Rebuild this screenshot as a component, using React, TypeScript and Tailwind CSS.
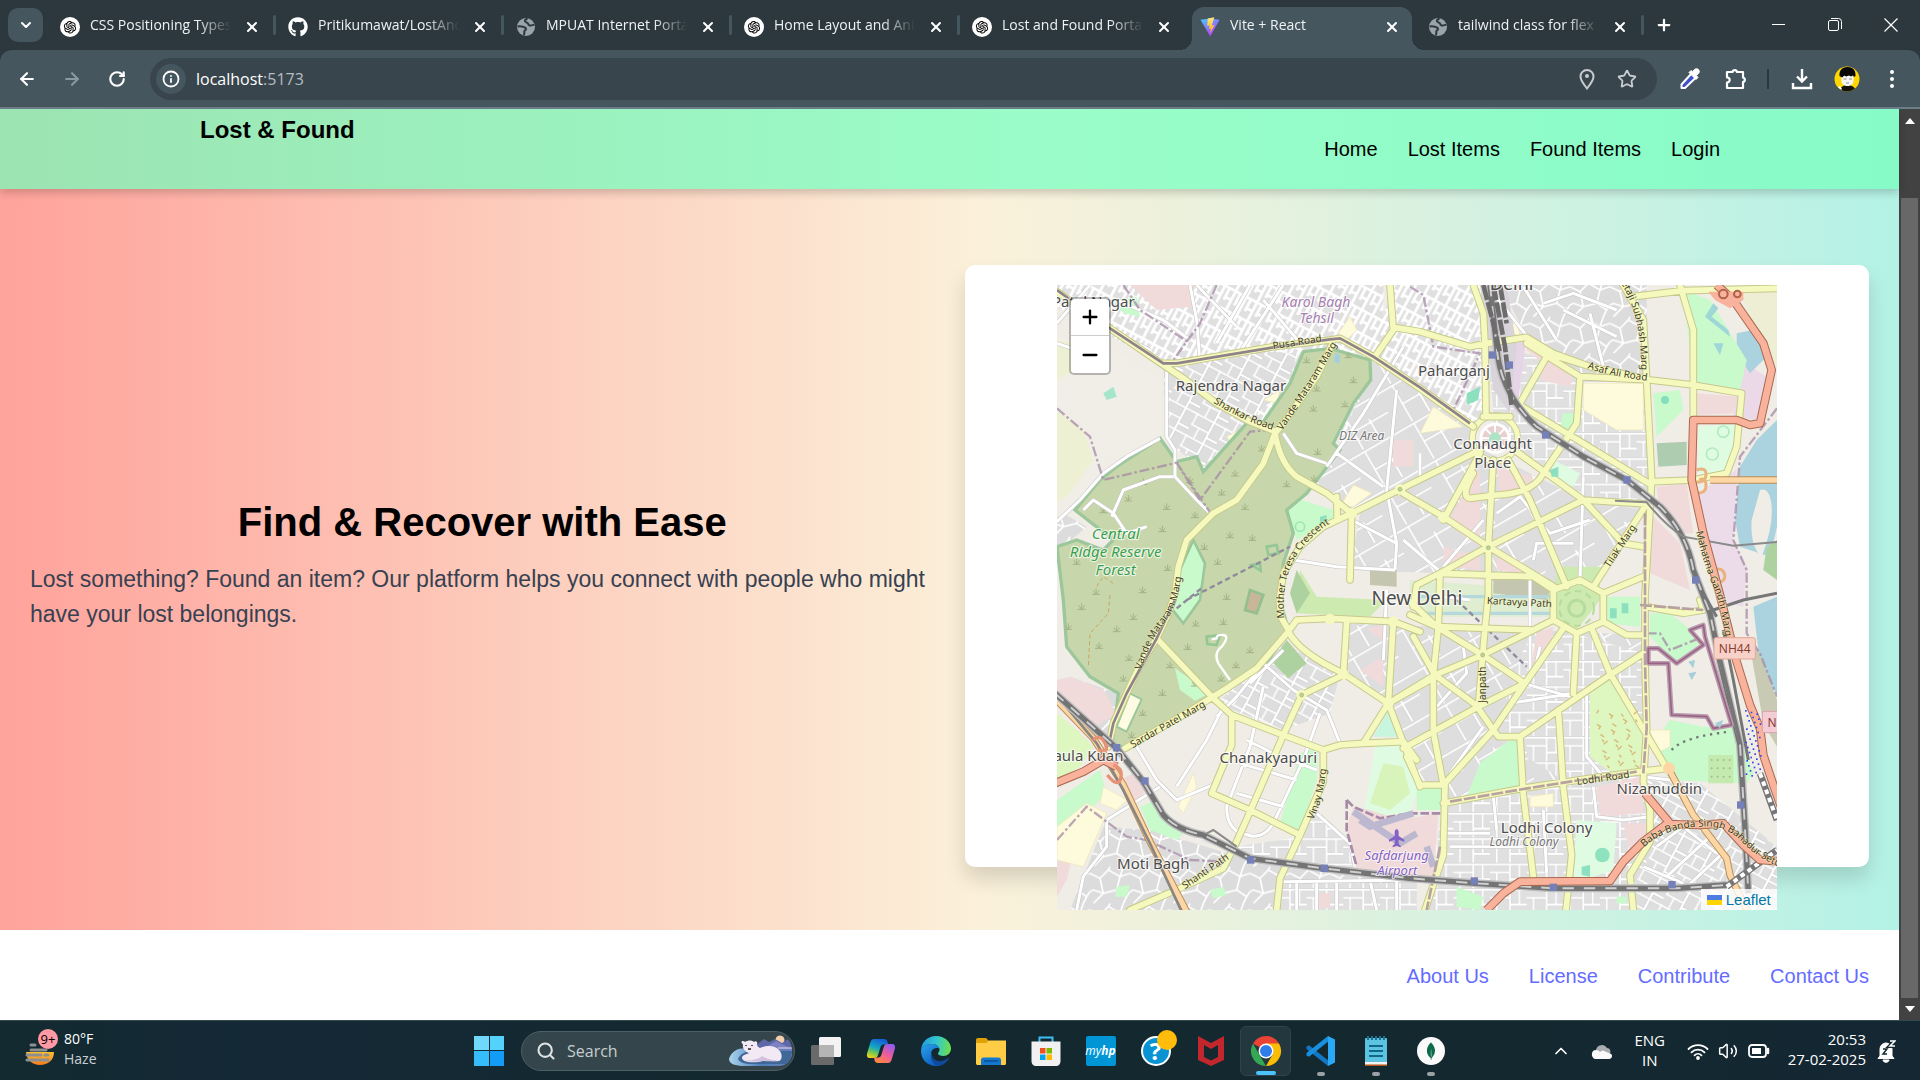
import React from "react";
import { AiOutlineOpenAI } from "react-icons/ai";
import { FaGithub } from "react-icons/fa";
import { SiMongodb } from "react-icons/si";
import {
  ArrowLeft,
  ArrowRight,
  ChevronDown,
  ChevronUp,
  Info,
  Minus,
  Plus,
  RotateCw,
  Search,
  Star,
  Volume2,
  X,
} from "lucide-react";

/* ---------- Browser tab strip ---------- */

function ChatIcon() {
  return (
    <span className="flex size-5 items-center justify-center rounded-full bg-white text-black">
      <AiOutlineOpenAI className="size-4" />
    </span>
  );
}

function GlobeIcon() {
  return (
    <svg viewBox="0 0 20 20" className="size-5" aria-hidden="true">
      <circle cx="10" cy="10" r="9" fill="#9aa3ab" />
      <path
        d="M1.500 9.500c3-.6 4.500 0 6 .4 1.800.4 2.700 1 2.500 2.300-.2 1-1.700 1-1.700 2.300 0 1.200.4 2.200-.6 3.800"
        fill="none"
        stroke="#2d383e"
        strokeWidth="2"
      />
      <path d="M11.500 1.500c-2.300 1-3.300 2-2.300 3.200.8 1 2.800.6 3 2.200.2 1.500 1.600 1.900 3.300 1.500l3-.8" fill="none" stroke="#2d383e" strokeWidth="2" />
    </svg>
  );
}

function ViteIcon() {
  return (
    <svg viewBox="0 0 20 20" className="size-5" aria-hidden="true">
      <defs>
        <linearGradient id="viteA" x1="0" y1="0" x2="0.6" y2="1">
          <stop offset="0" stopColor="#41d1ff" />
          <stop offset="1" stopColor="#bd34fe" />
        </linearGradient>
        <linearGradient id="viteB" x1="0" y1="0" x2="0" y2="1">
          <stop offset="0" stopColor="#ffea83" />
          <stop offset="1" stopColor="#ffa800" />
        </linearGradient>
      </defs>
      <path d="M0.500 2.800 10 1.500 19.600 2.800 10.300 19.600z" fill="url(#viteA)" />
      <path d="M14.300.2 7.700 1.500 7.200 8.900l2.500-.5-.8 3.500 2-.5-.9 5.300 4.500-8.800-2.700.6z" fill="url(#viteB)" />
    </svg>
  );
}

type Tab = { title: string; icon: React.ReactNode; active?: boolean; sep?: boolean };

const tabs: Tab[] = [
  { title: "CSS Positioning Types", icon: <ChatIcon />, sep: true },
  { title: "Pritikumawat/LostAnd", icon: <FaGithub className="size-5 text-white" />, sep: true },
  { title: "MPUAT Internet Portal", icon: <GlobeIcon />, sep: true },
  { title: "Home Layout and Ani", icon: <ChatIcon />, sep: true },
  { title: "Lost and Found Portal", icon: <ChatIcon /> },
  { title: "Vite + React", icon: <ViteIcon />, active: true },
  { title: "tailwind class for flex", icon: <GlobeIcon />, sep: true },
];

function TabItem({ tab }: { tab: Tab }) {
  return (
    <div className="relative flex h-full min-w-0 max-w-[228px] flex-1 items-end">
      <div
        className={
          tab.active
            ? "relative mx-1 flex h-[43px] min-w-0 flex-1 items-center rounded-t-xl bg-[#45565f] pl-2 pr-[10px] pb-2"
            : "relative mx-1 flex h-[43px] min-w-0 flex-1 items-center pl-2 pr-[10px] pb-2"
        }
      >
        {tab.active && (
          <>
            <span className="absolute bottom-0 -left-3 size-3 bg-[radial-gradient(circle_at_0_0,transparent_12px,#45565f_12px)]" />
            <span className="absolute bottom-0 -right-3 size-3 bg-[radial-gradient(circle_at_100%_0,transparent_12px,#45565f_12px)]" />
          </>
        )}
        <span className="mt-1 shrink-0">{tab.icon}</span>
        <span className="ml-[10px] mr-2 flex-1 overflow-hidden whitespace-nowrap text-sm leading-5 text-[#eef2f4] [mask-image:linear-gradient(to_right,#000_75%,transparent_98%)]">
          {tab.title}
        </span>
        <button aria-label={"Close " + tab.title} className="mt-1 flex size-5 items-center justify-center text-white">
          <X className="size-4" strokeWidth={3} />
        </button>
      </div>
      {tab.sep && <span className="absolute right-0 top-[15px] h-5 w-[3px] rounded bg-[#45565f]" />}
    </div>
  );
}

function TabStrip() {
  return (
    <div className="flex h-[50px] items-stretch bg-[#2d383e] pl-2">
      <button aria-label="Search tabs" className="mt-2 flex h-[34px] w-[35px] items-center justify-center rounded-[10px] bg-[#45565f] text-white">
        <ChevronDown className="size-4" strokeWidth={3} />
      </button>
      <div className="ml-[5px] flex flex-1">
        {tabs.map((t) => (
          <TabItem key={t.title} tab={t} />
        ))}
        <button aria-label="New tab" className="ml-2 flex w-6 items-center justify-center text-white">
          <Plus className="size-[18px]" strokeWidth={3} />
        </button>
      </div>
      <div className="flex items-center gap-9 pr-[19px] text-white">
        <button aria-label="Minimize" className="flex size-5 items-center justify-center">
          <svg viewBox="0 0 14 14" className="size-[14px]"><path d="M0 6.500h13" stroke="currentColor" /></svg>
        </button>
        <button aria-label="Restore" className="flex size-5 items-center justify-center">
          <svg viewBox="0 0 14 14" className="size-[14px]" fill="none" stroke="currentColor">
            <rect x=".5" y="2.500" width="10" height="10" rx="1.500" />
            <path d="M3 .5h7.500a3 3 0 0 1 3 3V11" />
          </svg>
        </button>
        <button aria-label="Close window" className="flex size-5 items-center justify-center">
          <svg viewBox="0 0 14 14" className="size-[14px]"><path d="M.5.5l13 13M13.500.5l-13 13" stroke="currentColor" strokeWidth="1.200" /></svg>
        </button>
      </div>
    </div>
  );
}

/* ---------- Toolbar ---------- */

function Avatar() {
  return (
    <svg viewBox="0 0 26 26" className="size-[26px]" aria-hidden="true">
      <clipPath id="avatarClip"><circle cx="13" cy="13" r="12.500" /></clipPath>
      <g clipPath="url(#avatarClip)">
        <rect width="26" height="26" fill="#ffd600" />
        <path d="M6 26c0-5 3-7 7.500-7s8 2 8 7z" fill="#16120c" />
        <path d="M7.500 9h12v6c0 3-3 5-6 5s-6-2-6-5z" fill="#f4f4f4" />
        <path d="M5.500 10C5 4 8.500 1 13.500 1S22 4 21.500 10l-1.500 1-1-1.500-2 1-2-1-3 1-1.500-1-2.500 2z" fill="#050505" />
        <path d="M9.500 13h3m2.500 0h3M12 17h3" stroke="#777" strokeWidth=".8" />
        <path d="M4 21l3 3 1-1-2-3z" fill="#fff" />
      </g>
    </svg>
  );
}

function Toolbar() {
  return (
    <div className="bg-[#2d383e]">
      <div className="flex h-[59px] items-center rounded-t-xl border-b-2 border-[#6d7f89] bg-[#45565f] pl-[15px] pr-4 text-white">
        <button aria-label="Back" className="flex size-6 items-center justify-center"><ArrowLeft className="size-5" strokeWidth={2.500} /></button>
        <button aria-label="Forward" className="ml-[21px] flex size-6 items-center justify-center text-[#8a989f]"><ArrowRight className="size-5" strokeWidth={2.500} /></button>
        <button aria-label="Reload" className="ml-[21px] flex size-6 items-center justify-center"><RotateCw className="size-[18px]" strokeWidth={2.800} /></button>
        <div className="ml-[21px] flex h-[42px] flex-1 items-center rounded-full bg-[#39454c] pl-[6px] pr-5">
          <button aria-label="View site information" className="flex size-[30px] items-center justify-center rounded-full bg-[#45565f]">
            <Info className="size-[18px]" strokeWidth={2.400} />
          </button>
          <a href="#address" className="ml-[10px] flex-1 text-base leading-6 text-white">
            localhost<span className="text-[#b3bdc3]">:5173</span>
          </a>
          <button aria-label="Location" className="flex size-5 items-center justify-center">
            <svg viewBox="0 0 20 22" className="h-[22px] w-5" fill="none" stroke="#c7ccd0" strokeWidth="2">
              <path d="M10 20.500C6 15.500 3.500 12 3.500 8.500a6.500 6.500 0 0 1 13 0c0 3.500-2.500 7-6.500 12z" />
              <circle cx="10" cy="8" r="2" fill="#c7ccd0" stroke="none" />
            </svg>
          </button>
          <button aria-label="Bookmark this page" className="ml-5 flex size-5 items-center justify-center text-[#c7ccd0]"><Star className="size-5" strokeWidth={2.200} /></button>
        </div>
        <button aria-label="Color picker" className="ml-[23px] flex size-5 items-center justify-center">
          <svg viewBox="0 0 22 22" className="size-[22px] shrink-0">
            <path d="M12.500 5.500 2.500 16.500v3.500H6L17 9.500z" fill="#3f51c8" stroke="#fff" strokeWidth="2" strokeLinejoin="round" />
            <path d="M10 4.500l2-2 1.500 1.200 2-2.200c1.200-1.200 3-1 4 0s1.200 2.800 0 4L17.500 7.500 19 9.500l-2 2z" fill="#fff" stroke="#fff" />
          </svg>
        </button>
        <button aria-label="Extensions" className="ml-[26px] flex size-5 items-center justify-center">
          <svg viewBox="0 0 22 22" className="size-[22px] shrink-0" fill="none" stroke="#fff" strokeWidth="2.200" strokeLinejoin="round">
            <path d="M2 4h5.500a2.300 2.300 0 0 1 4.500 0H18v5.500a2.300 2.300 0 0 1 0 4.500v6H2v-5.500c3.600 0 3.600-5 0-5z" />
          </svg>
        </button>
        <span className="ml-[21px] h-5 w-[2px] bg-[#2d383e]" />
        <button aria-label="Downloads" className="ml-[22px] flex size-[22px] items-center justify-center">
          <svg viewBox="0 0 22 22" className="size-[22px]" fill="none" stroke="#fff" strokeWidth="2.400">
            <path d="M11 1v12M6 8.500l5 5 5-5M2 15v5h18v-5" />
          </svg>
        </button>
        <button aria-label="Profile" className="ml-[21px]"><Avatar /></button>
        <button aria-label="Menu" className="ml-5 flex size-6 items-center justify-center">
          <svg viewBox="0 0 6 20" className="h-5 w-[6px]" fill="#fff"><circle cx="3" cy="3" r="2" /><circle cx="3" cy="10" r="2" /><circle cx="3" cy="17" r="2" /></svg>
        </button>
      </div>
    </div>
  );
}

/* ---------- Map drawing ---------- */

const forest =
  "M21 800 80 780 160 810 190 780 75 690 150 600 200 560 330 475 380 545 440 530 460 575 590 430 640 425 720 310 760 215 840 205 960 240 962 300 910 370 850 490 870 510 770 640 710 690 730 760 700 850 690 960 715 1050 650 1150 500 1245 235 1400 185 1400 205 1240 120 1190 50 1100 40 960z";

const yellowRoads = [
  "M21 35 180 145 340 255 400 295 500 370 600 425 670 452",
  "M845 195 800 290 700 430 675 460 640 550 560 660 490 700 410 780 385 860 375 940 355 1000 320 1075 265 1165 230 1240 190 1330 175 1400",
  "M675 460Q690 550 740 590L830 640 905 700 1050 628 1290 510",
  "M905 700 900 900M860 650 862 720",
  "M905 700 820 740 750 800 700 880 688 960 692 1010 715 1050",
  "M1020 15 1030 150 975 230M1030 142 1110 155 1260 200 1310 190 1430 172 1510 220 1620 260",
  "M340 250 380 250 670 200 840 180 870 175 970 230 1110 325 1270 440",
  "M1270 15 1300 100 1305 190 1308 410M1380 410 1300 410",
  "M1430 190 1590 290 1800 300 1930 315 2075 340 2060 500 2030 580 1930 600 1810 605",
  "M1510 225 1620 260 1780 295M1490 230 1410 370M1400 370 1600 490 1800 612",
  "M1590 290 1580 430 1480 580Q1450 640 1340 645L1260 655Q1230 650 1270 580",
  "M1720 15 1780 120 1790 300 1805 600 1800 690 1785 945 1785 1145 1790 1345 1780 1505 1800 1585 1800 1685 1740 1785 1750 1890",
  "M1750 50 1900 32 2180 25M1890 15 1930 150 1930 430",
  "M1290 520 1180 720M1330 540 1315 800 1315 945 1305 1045 1298 1125 1285 1285 1330 1350 1345 1370 1410 1370",
  "M1375 540 1440 660 1550 920M1400 515 1600 660 1720 790 1780 800",
  "M1060 640 1180 710 1315 800 1520 925M1600 660 1315 800 1170 880 1100 915 1090 980",
  "M1600 660 1790 672 1630 920",
  "M1170 880 1450 890 1510 930 1590 900 1660 940 1780 890",
  "M1510 930 1510 1020 1450 1050 1160 1040 1080 1005M1660 940 1660 1025 1580 1060 1510 1020M1170 880 1165 1040 1150 1185 1150 1355 1180 1515",
  "M1080 965 1160 1040 1298 1125 1425 1210M1450 1050 1298 1125 1155 1185 1015 1270",
  "M1155 1185 1285 1280 1150 1355 1060 1405M1425 1210 1285 1280M1540 1045 1425 1210 1330 1350 1180 1515",
  "M1580 1060 1570 1240M1625 1045 1680 1180 1850 1465M1780 1120 1680 1185 1410 1370 1420 1545 1450 1790M1660 1025 1730 1065 1780 1065",
  "M1180 1570 1420 1525 1620 1495 1770 1475 1850 1465M1525 1290 1540 1525 1565 1725 1548 1890",
  "M1090 1070 1155 1185M1070 1430 1110 1515 1185 1515 1180 1725 1125 1890",
  "M225 1405 400 1305 530 1225 620 1165 715 1055",
  "M715 1055 740 1020 840 1015 1030 1025 1110 1055M715 1055Q750 1120 880 1180L1015 1270 1140 1200",
  "M890 1025 880 1185 755 1245 700 1365 600 1595 560 1685 520 1765 390 1825 240 1890",
  "M1030 1025 1015 1270 1110 1520M1015 1270 940 1390 870 1395 820 1410 700 1365 545 1305 490 1255 320 1075",
  "M940 1390 1060 1385 1100 1440M545 1305 545 1395 485 1540 600 1590 750 1665",
  "M820 1410 820 1505 750 1665 690 1795 680 1890M1790 980 1900 1000 1960 990 1950 960",
];

const whiteRoads = [
  "M350 255 350 470 375 510 375 590 440 660 490 710",
  "M21 725 90 660 160 580 230 530 330 475",
  "M440 15 560 140M600 15 500 190M700 15 560 230M420 15 440 120 450 250M640 60 760 200",
  "M120 15 20 130M21 190 140 230 180 150 300 210M200 60 340 120 420 180",
  "M700 460 740 520 830 550M185 710 220 630 330 590 370 590M100 690 130 660 190 700 230 760 290 740",
  "M830 560 940 400 1060 200M860 520 1000 620M1040 330 1010 630 1040 790 1035 870M730 840 860 860 1035 870M905 720 1040 790",
  "M1310 15 1440 180M1480 70 1570 40 1700 90M1420 20 1520 180M1620 100 1660 260M1540 90 1700 170",
  "M1340 700 1410 650 1500 760 1620 720M1600 590 1590 900M1450 840 1460 790 1570 790M1300 720 1180 860M1110 520 1110 600",
  "M1060 780 1165 870M1180 950 1260 960M1010 930 1000 1140M1440 880 1440 1170",
  "M600 1210 700 1110M500 1310 560 1250 640 1150 730 1230 830 1290 870 1390",
  "M380 1520 470 1380 520 1280M260 1400 320 1500 380 1560 500 1510M170 1620 330 1520M170 1620 170 1700 100 1790 80 1890",
  "M640 1220 600 1400 530 1580Q530 1660 600 1665M810 1300 760 1440 670 1630Q640 1680 590 1665",
  "M800 1600 900 1690 915 1760M590 1380 670 1420 800 1470M570 1450 740 1500M560 1540 700 1580",
  "M700 1805 1090 1800M740 1800 740 1890M800 1810 800 1890M860 1800 860 1890M960 1800 980 1890M1040 1800 1040 1890",
  "M1180 1550 1180 1660 1320 1660M1330 1550 1340 1650M1630 1520 1640 1610 1720 1620 1800 1610M1480 1590 1490 1780M1200 1700 1420 1700",
  "M1610 1245 1610 1430 1660 1490M1380 1270 1570 1240M1420 1210 1560 1250M1470 1100 1450 1190",
  "M1780 1490 1860 1500 1900 1540M1820 1700 1900 1640 2000 1720M1850 1790 1980 1670M1900 1830 2040 1700M1780 1760 1900 1810",
  "M1160 1280 1250 1180 1240 1100M1080 1390 1160 1360M1200 1480 1300 1340",
];

const greens: [string, string][] = [
  ["M710 690 740 655 850 690 850 720 740 780z", "#c8facc"],
  ["M710 1080 770 1150 715 1195 665 1145z", "#aed1a0"],
  ["M1900 30 1980 60 2090 240 2070 330 1930 310z", "#c8facc"],
  ["M1945 440 2055 430 2055 500 2030 580 1945 580z", "#dffce2"],
  ["M1820 490 1910 485 1910 555 1825 560z", "#aecdb0"],
  ["M1810 340 1890 330 1900 390 1820 470z", "#c8facc"],
  ["M750 1420 805 1400 800 1500 750 1660 690 1630z", "#c8facc"],
  ["M975 1400 1060 1390 1110 1510 1080 1600 940 1610z", "#dffce2"],
  ["M1000 1450 1060 1460 1080 1540 1020 1590 960 1570z", "#d8f4bb"],
  ["M970 1370 1015 1290 1040 1370z", "#c8f5dd"],
  ["M1250 1550 1290 1450 1390 1370 1410 1380 1410 1540 1250 1560z", "#c8facc"],
  ["M1100 1520 1180 1520 1180 1590 1100 1590z", "#c8facc"],
  ["M1620 1240 1680 1195 1780 1370 1770 1460 1700 1490 1620 1430z", "#def6c0"],
  ["M1580 1620 1700 1630 1690 1770 1600 1800 1570 1790z", "#dffce2"],
  ["M1800 1000 1860 1000 1960 1080 1880 1150 1800 1070z", "#c8facc"],
  ["M1860 1320 1960 1340 2060 1340 2110 1480 2090 1510 1860 1500 1800 1400z", "#c8facc"],
  ["M1975 1425 2050 1425 2050 1510 1975 1510z", "#c5eab0"],
  ["M1520 860 1650 860 1650 960 1580 1050 1510 1010z", "#cdebb0"],
  ["M1670 950 1770 950 1770 1040 1670 1030z", "#c8facc"],
  ["M21 1560 150 1470 170 1540 110 1600 21 1680z", "#c8facc"],
  ["M21 1300 80 1350 130 1400 90 1460 21 1500z", "#def6c0"],
  ["M270 1580 320 1560 350 1620 400 1660 380 1680 300 1650z", "#c8facc"],
  ["M750 870 800 950 1010 960 960 1010 740 1000z", "#cdebb0"],
  ["M740 870 780 940 740 1000 720 940z", "#aed1a0"],
  ["M190 60 260 50 270 110 220 100z", "#c8facc"],
  ["M160 340 190 320 200 350 170 360z", "#a5e6cb"],
  ["M1220 1820 1300 1850 1290 1890 1220 1880z", "#c8facc"],
  ["M2150 800 2181 780 2181 900 2140 870z", "#aed1a0"],
  ["M1540 400 1580 400 1560 450 1530 440z", "#c8facc"],
  ["M1510 540 1590 580 1570 620 1500 590z", "#dffce2"],
  ["M200 1820 240 1815 230 1850 195 1850z", "#c8facc"],
  ["M480 1830 520 1820 530 1845 490 1855z", "#c8facc"],
  ["M1700 1850 1730 1850 1730 1870 1700 1870z", "#c8facc"],
];

const pinks = [
  "M240 15 430 15 430 80 320 90z",
  "M1490 240 1570 290 1560 320 1470 300z",
  "M1430 200 1490 220 1480 250 1430 210z",
  "M1190 730 1290 560 1290 800 1230 760z",
  "M1340 560 1450 590 1430 640 1350 640z",
  "M1180 800 1290 830 1290 870 1180 860z",
  "M1340 830 1500 900 1340 870z",
  "M1640 1520 1770 1490 1780 1600 1650 1610z",
  "M1720 1630 1790 1630 1790 1680 1740 1720z",
  "M1940 340 2060 350 2050 400 1940 405z",
  "M1460 1060 1510 1040 1500 1120 1440 1170z",
  "M950 1045 1010 1035 1010 1090z",
  "M930 1170 1000 1130 1000 1220z",
  "M1820 620 1910 610 1930 760 1900 760 1830 700z",
  "M1800 700 1890 790 1920 930 1800 880z",
  "M910 1580 960 1590 1050 1620 1165 1600 1150 1790 920 1770 890 1640z",
  "M60 1190 160 1230 200 1300 120 1350 21 1260 21 1200z",
  "M1030 480 1090 480 1090 560 1030 560z",
  "M210 1500 250 1480 290 1530 250 1570z",
  "M21 1740 70 1720 50 1800 21 1850z",
  "M805 1840 840 1840 840 1885 805 1885z",
];

const creams = [
  "M1600 310 1780 310 1780 450 1700 450 1600 390z",
  "M1110 460 1150 380 1240 440z",
  "M870 680 910 615 965 640 910 680z",
  "M1370 150 1400 120 1410 170z",
  "M1440 1550 1510 1540 1510 1580 1440 1580z",
  "M21 1640 110 1570 170 1600 100 1760 21 1740z",
  "M160 1520 230 1560 200 1590 150 1570z",
  "M385 1580 430 1480 440 1520 400 1600z",
  "M1800 1350 1860 1350 1860 1400 1820 1420z",
  "M865 160 900 110 920 150 890 180z",
  "M530 470 570 450 580 480 545 490z",
  "M640 360 690 330 680 370z",
];

const trees = [
  [235, 655], [350, 680], [435, 705], [515, 637], [555, 580], [635, 505], [770, 240], [895, 225], [910, 300],
  [800, 325], [790, 385], [885, 372], [803, 515], [792, 595], [710, 612], [585, 680], [540, 765], [607, 773],
  [503, 845], [353, 863], [463, 800], [337, 747], [280, 605], [80, 845], [138, 935], [278, 930], [530, 950],
  [95, 980], [55, 1040], [147, 1097], [200, 1047], [250, 1010], [237, 1133], [220, 1195], [337, 1238],
  [278, 1298], [360, 1155], [413, 1100], [520, 1025], [437, 1030], [600, 1110], [558, 1155], [513, 1195],
  [435, 1210], [160, 690], [420, 600], [245, 1365],
];

const stations = [
  [1327, 225], [1378, 255], [1487, 465], [1731, 600], [1937, 900], [602, 1740], [823, 1765], [200, 1403],
  [285, 1503], [1273, 1803], [1510, 1822], [1866, 1814], [2072, 1575],
];

const places: [string, number, number, number][] = [
  ["Patel Nagar", 130, 82, 45],
  ["Rajendra Nagar", 543, 332, 45],
  ["Paharganj", 1212, 287, 45],
  ["Connaught", 1328, 507, 45],
  ["Place", 1328, 564, 45],
  ["Delhi", 1385, 30, 54],
  ["New Delhi", 1101, 974, 57],
  ["Chanakyapuri", 655, 1448, 45],
  ["Dhaula Kuan", 85, 1442, 45],
  ["Moti Bagh", 310, 1766, 45],
  ["Nizamuddin", 1828, 1541, 45],
  ["Lodhi Colony", 1490, 1659, 45],
];

const streetNames: [string, string, string][] = [
  ["pusa", "M670 208 870 176", "Pusa Road"],
  ["shankar", "M490 368Q580 425 700 460", "Shankar Road"],
  ["vande1", "M696 452Q770 350 880 160", "Vande Mataram Marg"],
  ["vande2", "M274 1170Q300 1080 350 1020T400 780", "Vande Mataram Marg"],
  ["teresa", "M703 1015Q690 880 760 800T880 720", "Mother Teresa Crescent"],
  ["sardar", "M248 1405 510 1255", "Sardar Patel Marg"],
  ["vinay", "M790 1620Q830 1540 832 1400", "Vinay Marg"],
  ["shanti", "M405 1828 600 1694", "Shanti Path"],
  ["asaf", "M1612 265Q1700 295 1830 306", "Asaf Ali Road"],
  ["subhash", "M1700 -10Q1780 100 1772 290", "Netaji Subhash Marg"],
  ["tilak", "M1678 865 1790 695", "Tilak Marg"],
  ["kartavya", "M1310 972 1540 984", "Kartavya Path"],
  ["janpath", "M1308 1268 1308 1100", "Janpath"],
  ["lodhi", "M1582 1515 1790 1486", "Lodhi Road"],
  ["mahatma", "M1938 755Q1960 850 1990 920T2036 1150", "Mahatma Gandhi Marg"],
  ["baba", "M1782 1702Q1850 1640 1960 1640Q2030 1635 2080 1690T2240 1780", "Baba Banda Singh Bahadur Setu"],
];

function DelhiMap() {
  const trunk = [
    "M2000 15 2050 60 2140 190 2165 270 2130 430 2100 435 2060 420 1930 420 1925 600 1960 760 2010 945 2060 1145 2100 1275 2130 1345 2140 1425 2170 1515 2200 1600",
    "M1310 1890 1360 1840 1410 1805 1680 1803 1720 1745 1780 1685 1850 1632 1950 1635 2020 1630 2080 1695 2130 1740 2200 1745",
    "M1785 1540 1860 1630",
    "M15 1510 100 1475 160 1440 200 1460",
  ].join("");
  const orange = "M15 1255 130 1375 220 1515 300 1685 410 1895M1855 1465 1930 1605 2030 1735 2040 1785 2090 1890M1980 600 2200 600";
  const rail =
    "M1320 15 1340 200Q1350 340 1460 440L1600 530 1730 600 1830 680Q1910 760 1930 870L1980 1000 2010 1145 2070 1395 2085 1645 2095 1840M15 1240 200 1405 280 1505 340 1605Q380 1650 460 1665L600 1735 820 1765 1080 1795 1280 1810 1510 1825 1880 1825 2030 1815";
  const roads = yellowRoads.join("");
  return (
    <svg viewBox="21 15 2160 1875" className="block h-[625px] w-full" preserveAspectRatio="xMidYMid slice" role="img" aria-label="Map of New Delhi">
      <defs>
        <pattern id="blockA" width="96" height="72" patternUnits="userSpaceOnUse" patternTransform="rotate(28)">
          <rect width="96" height="72" fill="#dedede" />
          <path d="M0 4h96M0 38h60M60 0v72M28 38v34M60 54h36M4 0v38" stroke="#c9c9c9" strokeWidth="8" fill="none" />
          <path d="M0 4h96M0 38h60M60 0v72M28 38v34M60 54h36M4 0v38" stroke="#fff" strokeWidth="6" fill="none" />
        </pattern>
        <pattern id="blockB" width="64" height="36" patternUnits="userSpaceOnUse" patternTransform="rotate(-62)">
          <rect width="64" height="36" fill="#e0e0e0" />
          <path d="M0 4h64M0 20h40M40 0v36M10 20v16" stroke="#fff" strokeWidth="8" fill="none" />
        </pattern>
        <pattern id="blockC" width="110" height="76" patternUnits="userSpaceOnUse">
          <rect width="110" height="76" fill="#e1e0e0" />
          <path d="M0 5h110M0 30h60M60 5v71M20 30v46M60 50h50M88 5v45" stroke="#c9c9c9" strokeWidth="8" fill="none" />
          <path d="M0 5h110M0 30h60M60 5v71M20 30v46M60 50h50M88 5v45" stroke="#fff" strokeWidth="6" fill="none" />
        </pattern>
        <pattern id="blockD" width="170" height="130" patternUnits="userSpaceOnUse" patternTransform="rotate(-30)">
          <rect width="170" height="130" fill="#dedede" />
          <path d="M0 8h170M50 8v122M110 60v70M50 70h120" stroke="#c9c9c9" strokeWidth="8" fill="none" />
          <path d="M0 8h170M50 8v122M110 60v70M50 70h120" stroke="#fff" strokeWidth="6" fill="none" />
        </pattern>
        <pattern id="organic" width="120" height="110" patternUnits="userSpaceOnUse">
          <rect width="120" height="110" fill="#dcdcdc" />
          <path d="M0 20 30 35 55 10 90 30 120 20M30 35 40 80 10 110M40 80 80 70 90 30M80 70 110 90 120 75M0 75 10 70 40 80M110 90 100 110M100 0 90 30M10 0V-10M55 10 60 0" stroke="#fff" strokeWidth="5" fill="none" />
        </pattern>
      </defs>

      <rect x="0" y="0" width="2200" height="1900" fill="#f0ece6" />
      <path d="M21 15H1000V470H590L460 575 350 480 340 255 21 80z" fill="url(#blockB)" />
      <path d="M340 255 640 215 740 220 720 310 590 430 460 560 350 480z" fill="url(#blockA)" />
      <path d="M960 240 1300 420 1250 520 1040 630 905 700 780 620 870 510z" fill="url(#blockD)" />
      <path d="M1030 15H1300L1310 420 1260 430 960 230z" fill="url(#blockB)" />
      <path d="M1350 15H1790V300L1590 290 1430 170z" fill="url(#organic)" />
      <path d="M1310 200 1480 230 1590 290 1800 300V690L1600 660 1340 480z" fill="url(#blockC)" />
      <path d="M930 700 1300 510 1600 660 1780 690 1640 920 1510 930 1170 880 900 870z" fill="url(#blockD)" />
      <path d="M890 1030 1160 1040 1450 1050 1780 1065V1500L1180 1570 1100 1520 1015 1270 880 1180z" fill="url(#blockD)" />
      <path d="M1430 1080 1570 1060 1780 1120V1500H1540L1330 1370z" fill="url(#blockC)" />
      <path d="M1180 1570 1640 1500 1800 1600V1890H1130z" fill="url(#blockC)" />
      <path d="M1780 1500 1950 1510 2181 1700V1890H1740z" fill="url(#blockA)" />
      <path d="M160 1640 300 1650 600 1740 1100 1800V1890H60z" fill="url(#organic)" />
      <path d="M400 1660 500 1690 560 1700 750 1670 800 1590 900 1680 920 1790 600 1740z" fill="url(#blockC)" />
      <path d="M700 1810H1100V1890H690z" fill="url(#blockC)" />
      <path d="M60 1190 200 1240 180 1400 30 1250z" fill="url(#organic)" />
      <path d="M500 1270 700 1090 870 1180 840 1300 700 1350z" fill="url(#blockA)" />
      <path d="M21 690 110 740 40 800 21 810z" fill="url(#organic)" />
      <path d="M21 170 180 210 330 290 340 460 180 540 80 660 21 715z" fill="#f1eee8" />
      <path d="M21 180 120 200 90 260 21 300zM21 390 100 450 130 540 60 640 21 670z" fill="#edf0d3" />
      <path d="M1080 900 1500 930 1500 1010 1080 1010z" fill="#dfeed0" />
      <path d="M1330 895 1470 895 1500 930 1490 960 1330 940zM960 865 1040 870 1040 920 960 915z" fill="#c5c6b0" />
      <path d="M1100 950H1500M1100 1000H1500" stroke="#b5d8dc" strokeWidth="10" />
      <path d="M2060 15H2200V280L2140 200z" fill="#eeeed5" />
      <path d="M2070 240 2150 290 2120 420 2050 410z" fill="#ecd9e7" />
      <path d="M1940 640 2060 570 2050 780 2090 860 2080 980 2000 960z" fill="#ecdcea" />
      <path d="M2181 420 2120 480 2070 560 2055 720 2070 800 2160 830 2181 740z" fill="#aad3df" />
      <path d="M2181 950 2110 980 2125 1110 2160 1220 2181 1240z" fill="#aad3df" />
      <path d="M2130 630Q2160 620 2165 680T2135 830Q2100 800 2105 720z" fill="#f0ece6" />
      <path d="M2100 1100 2125 1110 2181 1260V1400L2140 1330z" fill="#c9cab3" />
      <path d="M2060 160 2110 150 2150 230 2100 280 2060 220z" fill="#aad3df" />
      {greens.map(([d, c]) => <path key={d} d={d} fill={c} />)}
      <path d="M1965 110 1990 70 2005 85 1985 110 2035 150 2040 170zM1990 190 2020 190 2010 225z" fill="#9fd6d8" />
      {pinks.map((d) => <path key={d} d={d} fill="#f1dada" />)}
      {creams.map((d) => <path key={d} d={d} fill="#fefbdc" stroke="#eee5b8" strokeWidth="2" />)}
      <path d="M1325 160 1430 170 1400 400 1350 330z" fill="#e6d5e6" />
      <path d="M1290 15 1370 15 1400 200 1380 400 1330 330z" fill="#d9d3da" />

      <path d={forest} fill="#c8d7ab" stroke="#9cc79b" strokeWidth="10" />
      <path d="M385 880 430 780 465 850 450 960 400 1030 360 980z" fill="#c8facc" stroke="#9cc79b" strokeWidth="8" />
      <path d="M375 1165 480 1240 435 1262 390 1230z" fill="#c8facc" />
      <path d="M200 1340 240 1240 275 1258 230 1355z" fill="#fdfbe2" stroke="#9cc79b" strokeWidth="6" />
      <path d="M600 930 640 945 620 1000 585 990z" fill="#c8b698" stroke="#94bf8e" strokeWidth="8" />
      <path d="M650 800 680 795 685 820 655 825zM605 855 630 850 632 872zM470 1070 510 1065 500 1095 472 1092z" fill="none" stroke="#94c795" strokeWidth="8" />
      <path d="M180 945 175 1000 120 1060 115 1160M140 920 160 890 190 910" fill="none" stroke="#c9a55b" strokeWidth="3" strokeDasharray="12 8" />
      {trees.map(([x, y]) => (
        <path key={x + "-" + y} d={`M${x - 12} ${y + 8}h24M${x} ${y + 8}v-18M${x} ${y + 8}l-9-12M${x} ${y + 8}l9-12`} stroke="#a4b486" strokeWidth="3" fill="none" />
      ))}
      <path d="M855 220 870 225 868 252 852 245z" fill="#a5cfdc" />

      <path d={whiteRoads.join("")} fill="none" stroke="#c4c4c4" strokeWidth="12" strokeLinejoin="round" />
      <path d={whiteRoads.join("")} fill="none" stroke="#fff" strokeWidth="9" strokeLinejoin="round" />
      <path d="M485 1078 500 1075Q500 1062 520 1065T515 1100Q490 1120 505 1150L540 1200" fill="none" stroke="#fff" strokeWidth="7" />

      <path d="M220 15 270 90 420 190M500 15 450 130 370 240M21 385 120 470 160 600 380 548 450 660 600 455 660 450M380 548 490 712M21 1680 110 1580 230 1670 290 1680 420 1740 540 1745M1080 20 1120 45 1150 200 1290 220 1210 390M2181 385 2070 530 2050 780 2090 870 2090 1060 2130 1120 2181 1250M1790 1060 1830 1060 1860 1110 1960 1070" fill="none" stroke="#a68aa6" strokeWidth="7" strokeDasharray="30 8 8 8" opacity=".75" />
      <path d="M410 960 720 800M1220 960 1430 1160M380 985 460 920" fill="none" stroke="#8f8a9b" strokeWidth="7" strokeDasharray="16 10" />
      <path d="M890 1560 910 1580 990 1615 1080 1600 1190 1600M890 1560 890 1650 920 1760" fill="none" stroke="#a68aa6" strokeWidth="8" strokeDasharray="26 8" />
      <path d="M910 1595 1050 1690 1100 1660M930 1620 960 1640 1090 1600M1130 1700 1150 1760" fill="none" stroke="#bbb8d0" strokeWidth="20" />

      <circle cx="1335" cy="475" r="42" fill="#e8d0d0" stroke="#fff" strokeWidth="9" />
      <circle cx="1335" cy="475" r="68" fill="none" stroke="#c6cb8e" strokeWidth="20" />
      <circle cx="1335" cy="475" r="68" fill="none" stroke="#f7fabf" strokeWidth="15" />
      <path d="M1335 430v90M1290 475h90M1303 443l64 64M1367 443l-64 64" stroke="#fff" strokeWidth="6" />
      <circle cx="1335" cy="475" r="18" fill="#aee3c5" />
      <path d={roads} fill="none" stroke="#c6c98c" strokeWidth="23" strokeLinejoin="round" strokeLinecap="round" />
      <path d={roads} fill="none" stroke="#f6f9bd" strokeWidth="17" strokeLinejoin="round" strokeLinecap="round" />
      {[[1050, 628], [905, 700], [755, 1245], [1030, 1025], [840, 1017], [880, 1183], [1015, 1270], [1315, 803], [1298, 1125], [1180, 712]].map(([x, y]) => (
        <circle key={x} cx={x} cy={y} r="16" fill="#f6f9bd" />
      ))}
      {[[1050, 628], [755, 1245], [1315, 803], [1298, 1125]].map(([x, y]) => (
        <circle key={x} cx={x} cy={y} r="6" fill="#b9d39b" stroke="#a9ad78" strokeWidth="2" />
      ))}
      <circle cx="1845" cy="360" r="17" fill="#84dfc0" stroke="#c8facc" strokeWidth="10" />
      <circle cx="1657" cy="1725" r="22" fill="#8ee2bd" />
      <path d="M1250 340 1290 320 1285 360 1250 375zM1500 570 1525 560 1525 590 1505 590zM1595 1760 1620 1755 1620 1790 1595 1785zM1680 985h20v30h-20zM1715 970h20v30h-20zM810 710l20-5v22l-20 3z" fill="#8ce0bf" />
      <circle cx="1580" cy="985" r="24" fill="none" stroke="#b6dc9b" strokeWidth="9" />
      <circle cx="1580" cy="985" r="52" fill="none" stroke="#b6dc9b" strokeWidth="6" strokeDasharray="20 14" />
      <circle cx="1987" cy="522" r="18" fill="none" stroke="#b2ebbf" strokeWidth="5" />
      <circle cx="2020" cy="455" r="17" fill="none" stroke="#b2ebbf" strokeWidth="5" />
      <circle cx="750" cy="740" r="14" fill="none" stroke="#9fe6b5" strokeWidth="5" />
      {Array.from({ length: 34 }, (_, i) => {
        const x = 1640 + ((i * 47) % 120);
        const y = 1300 + ((i * 31) % 170);
        return <path key={i} d={`M${x} ${y}l${i % 2 ? 12 : 6} ${i % 3 ? 8 : -10}`} stroke="#d7b878" strokeWidth="4" />;
      })}

      <path d="M21 30 180 145 340 250 380 250 670 202 840 178 870 175 970 230 1110 322 1260 430M375 960 320 1075 230 1240 190 1330 175 1400" fill="none" stroke="#8f8389" strokeWidth="8" />
      <path d="M1785 700V1145L1790 1345 1780 1480M1770 975 1960 990M1200 1565 1420 1527 1560 1505 1760 1475M1170 1700 1130 1890" fill="none" stroke="#b8a2a0" strokeWidth="8" strokeDasharray="36 6" />

      <path d={orange} fill="none" stroke="#b98f5a" strokeWidth="22" />
      <path d={orange} fill="none" stroke="#fcd6a4" strokeWidth="16" />
      <path d="M15 1240 140 1390 220 1530 300 1690 395 1895" fill="none" stroke="#8a8782" strokeWidth="8" />
      <circle cx="1857" cy="1465" r="18" fill="#fcd6a4" />
      <path d="M1940 570q30-10 28 15t-28 20M1940 640q30 0 28-25t-20-15M1990 870q30-10 34 15t-30 20" fill="none" stroke="#e8b37c" strokeWidth="9" />
      <path d={rail} fill="none" stroke="#bdbdbd" strokeWidth="24" />
      <path d={rail} fill="none" stroke="#747474" strokeWidth="16" />
      <path d={rail} fill="none" stroke="#cfcfcf" strokeWidth="6" strokeDasharray="34 30" />
      <path d="M1300 15 1330 130 1350 220M1330 15 1365 200 1385 380M1350 15 1370 130" fill="none" stroke="#6c6c6c" strokeWidth="14" strokeDasharray="46 7" />
      <path d="M2000 1100 2070 1390M2020 1050 2050 1200 2095 1440M1990 990 2080 960 2181 940M1960 940 2000 1010" fill="none" stroke="#777" strokeWidth="9" />
      <path d="M1695 662 1790 667Q1850 740 1900 770L2050 797 2190 785M470 1660 490 1650 560 1700" fill="none" stroke="#8a8a8a" strokeWidth="6" />
      <path d="M2030 1820 2181 1710M2130 1480 2181 1620" stroke="#777" strokeWidth="20" />
      <path d="M2030 1820 2181 1710M2130 1480 2181 1620" stroke="#fff" strokeWidth="12" strokeDasharray="14 12" />
      <path d={trunk} fill="none" stroke="#a9694f" strokeWidth="26" strokeLinejoin="round" />
      <path d={trunk} fill="none" stroke="#f9b29c" strokeWidth="20" strokeLinejoin="round" />
      <path d="M1975 35 2080 35 2080 60 2040 85 1995 60z" fill="#f9b29c" />
      <circle cx="2020" cy="42" r="13" fill="none" stroke="#b0634c" strokeWidth="6" />
      <circle cx="2062" cy="42" r="10" fill="none" stroke="#b0634c" strokeWidth="6" />
      <path d="M130 1380q20-20 35 10t-20 20M190 1455q30 10 22 40t-40-10" fill="none" stroke="#e79176" strokeWidth="10" />

      <path d="M1795 1105 1825 1105 1880 1150 1960 1095 1920 1050 1960 1035 1965 1070 2045 1335 1990 1345 1970 1310 1865 1305 1855 1150 1795 1150z" fill="#f0ece6" stroke="#b89bad" strokeWidth="14" strokeLinejoin="round" />
      <path d="M1795 1105 1825 1105 1880 1150 1960 1095 1920 1050 1960 1035 1965 1070 2045 1335 1990 1345 1970 1310 1865 1305 1855 1150 1795 1150z" fill="none" stroke="#9a6385" strokeWidth="5" strokeLinejoin="round" />
      <path d="M1915 1145 1935 1140 1930 1165zM1915 1180 1940 1175 1925 1200zM1995 1330 2020 1320 2010 1345z" fill="#a5cfdc" />
      <path d="M1865 1410Q1900 1370 2040 1355" fill="none" stroke="#777" strokeWidth="7" strokeDasharray="7 14" />
      {Array.from({ length: 40 }, (_, i) => (
        <rect key={i} x={2085 + ((i * 17) % 46)} y={1290 + i * 5} width="5" height="5" fill="#3448ea" />
      ))}
      {[0, 1, 2, 3].map((i) => [0, 1, 2].map((j) => <circle key={i + "-" + j} cx={1985 + i * 18} cy={1440 + j * 25} r="3" fill="#9cc088" />))}
      {stations.map(([x, y]) => <rect key={x} x={x - 11} y={y - 11} width="22" height="22" fill="#7580b8" />)}

      <path d="M1040 1648c5 0 6 6 6 12v8l17 11v6l-17-6v13l6 5v5l-12-4-12 4v-5l6-5v-13l-17 6v-6l17-11v-8c0-6 1-12 6-12z" fill="#8461c4" />
      <g fontFamily="'Noto Sans', sans-serif" textAnchor="middle" paintOrder="stroke" strokeLinejoin="round">
        <g fill="#4d4d4d" stroke="#ffffffb0" strokeWidth="7">
          {places.map(([t, x, y, s]) => <text key={t} x={x} y={y} fontSize={s}>{t}</text>)}
        </g>
        <g fontStyle="italic" fill="#39a04a" stroke="#ffffffb0" strokeWidth="7" fontSize="45">
          <text x="197" y="778">Central</text>
          <text x="197" y="832">Ridge Reserve</text>
          <text x="197" y="886">Forest</text>
        </g>
        <g fontStyle="italic" fill="#a67fb0" stroke="#ffffffb0" strokeWidth="7" fontSize="42">
          <text x="798" y="80">Karol Bagh</text>
          <text x="800" y="130">Tehsil</text>
        </g>
        <g fontStyle="italic" fill="#8461c4" stroke="#ffffffb0" strokeWidth="6" fontSize="39">
          <text x="1040" y="1740">Safdarjung</text>
          <text x="1042" y="1785">Airport</text>
        </g>
        <g fontStyle="italic" fill="#777" stroke="#ffffffb0" strokeWidth="6" fontSize="36">
          <text x="935" y="480">DIZ Area</text>
          <text x="1422" y="1698">Lodhi Colony</text>
        </g>
      </g>
      <g fontFamily="'Noto Sans', sans-serif" fontSize="30" fill="#3f3a2c" stroke="#f6f9bd90" strokeWidth="4" paintOrder="stroke">
        {streetNames.map(([id, d, t]) => (
          <g key={id}>
            <path id={"street-" + id} d={d} fill="none" stroke="none" />
            <text><textPath href={"#street-" + id}>{t}</textPath></text>
          </g>
        ))}
      </g>
      <g fontFamily="'Noto Sans', sans-serif" fontSize="36" textAnchor="middle" fill="#8a3d33">
        <rect x="1992" y="1073" width="124" height="64" rx="5" fill="#f8d2c8" stroke="#e4a596" strokeWidth="3" />
        <text x="2054" y="1118">NH44</text>
        <rect x="2137" y="1294" width="80" height="64" rx="5" fill="#f3ccd6" stroke="#d8a0ae" strokeWidth="3" />
        <text x="2166" y="1340">N</text>
      </g>
    </svg>
  );
}

function MapWidget() {
  return (
    <div className="relative w-[720px] shrink-0 self-start overflow-hidden">
      <DelhiMap />
      <div className="absolute left-[12px] top-[12px] overflow-hidden rounded-[5px] border-2 border-black/25 bg-white bg-clip-padding">
        <button aria-label="Zoom in" className="flex h-[37px] w-[38px] items-center justify-center border-b border-[#ccc] text-black">
          <Plus className="size-[22px]" strokeWidth={2.500} />
        </button>
        <button aria-label="Zoom out" className="flex h-[37px] w-[38px] items-center justify-center text-black">
          <Minus className="size-[22px]" strokeWidth={2.500} />
        </button>
      </div>
      <a href="#leaflet" className="absolute bottom-0 right-0 flex h-[21px] items-center gap-1 bg-white/80 px-[6px] text-[15px] leading-5 text-[#0078a8]">
        <svg viewBox="0 0 15 10" className="h-[10px] w-[15px]"><path fill="#4c7be1" d="M0 0h15v5H0z" /><path fill="#ffd500" d="M0 5h15v5H0z" /></svg>
        Leaflet
      </a>
    </div>
  );
}

/* ---------- Page ---------- */

function Page() {
  return (
    <div className="flex min-h-0 flex-1">
      <div className="flex min-w-0 flex-1 flex-col bg-white font-['Liberation_Sans',Arial,sans-serif]">
        <header className="relative z-10 flex h-20 items-start justify-between bg-[linear-gradient(to_right,#9ce4b2,#9afdc9_55%,#86fbc8)] pl-[200px] pr-[179px] shadow-[0_4px_8px_rgba(0,0,0,0.18)]">
          <h1 className="mt-[5px] text-2xl leading-8 font-bold text-black">Lost &amp; Found</h1>
          <nav className="flex gap-[30px] self-center text-xl leading-7 text-black">
            <a href="#home">Home</a>
            <a href="#lost">Lost Items</a>
            <a href="#found">Found Items</a>
            <a href="#login">Login</a>
          </nav>
        </header>
        <main className="grid grid-cols-2 items-center gap-[30px] bg-[linear-gradient(to_right,#ffa39b,#fbf1da_52%,#b4f2e6)] px-[30px] pt-[76px] pb-[63px]">
          <section className="pb-1">
            <h2 className="text-center text-[40px] leading-[50px] font-bold text-black">Find &amp; Recover with Ease</h2>
            <p className="mt-[15px] text-[23px] leading-[35px] text-[#374151]">
              Lost something? Found an item? Our platform helps you connect with people who might have your lost belongings.
            </p>
          </section>
          <section className="flex h-[602px] justify-center rounded-[10px] bg-white pt-5 shadow-[0_12px_20px_rgba(0,0,0,0.14)]">
            <MapWidget />
          </section>
        </main>
        <footer className="flex flex-1 items-center justify-end gap-10 bg-white px-[30px] pt-[2px] text-xl leading-7 text-[#646cff]">
          <a href="#about">About Us</a>
          <a href="#license">License</a>
          <a href="#contribute">Contribute</a>
          <a href="#contact">Contact Us</a>
        </footer>
      </div>
      <div className="flex w-[21px] flex-col items-center bg-[#424242]">
        <svg viewBox="0 0 10 6" className="mt-[9px] h-[6px] w-[10px]"><path d="M0 6 5 0l5 6z" fill="#fff" /></svg>
        <div className="mt-[74px] mb-2 w-[17px] flex-1 bg-[#686868]" />
        <svg viewBox="0 0 10 6" className="mb-2 h-[6px] w-[10px]"><path d="M0 0 5 6l5-6z" fill="#fff" /></svg>
      </div>
    </div>
  );
}

/* ---------- Taskbar icons ---------- */

function BearArt() {
  return (
    <svg viewBox="0 0 64 32" className="h-8 w-16" aria-hidden="true">
      <defs>
        <linearGradient id="lake" x1="0" x2="1"><stop offset="0" stopColor="#a9d4ee" /><stop offset=".5" stopColor="#4f7fb8" /><stop offset="1" stopColor="#6b7fc0" /></linearGradient>
        <clipPath id="bearClip"><path d="M0 0h50c9 0 14 7 14 16s-5 15-14 15H0z" /></clipPath>
      </defs>
      <g clipPath="url(#bearClip)">
        <circle cx="52" cy="5" r="4.500" fill="#f3cfae" />
        <path d="M28 10 36 4l5 3 6-3 7 4 6-4 4 3v16H28z" fill="#5e67a8" />
        <path d="M38 12l10-6 16 8v10H38z" fill="#7d82c2" />
        <path d="M50 12h14v12H50z" fill="#c9bcd9" opacity=".7" />
        <path d="M1 24C4 14 14 12 22 14h42v17H16C8 31 1 29 1 24z" fill="url(#lake)" />
        <path d="M10 24c2-5 8-8 14-8h40v13H24c-8 0-13-2-14-5z" fill="#3f6899" />
        <path d="M14 22c2-3 6-3 7-4-4-1-7-5-6-9-2-1-2-3 0-3 1 0 2 1 2 1 3-2 7-2 9 0 2-2 4 0 3 2 0 2 1 3 3 4 6-3 15-3 19 2 4 4 3 10 0 11-5 1-12-1-16 0-8 2-20 2-21-3z" fill="#f3e9f4" />
        <path d="M34 21c5 3 12 5 17 4-4 2-12 1-17 1-6 1-13 1-18-1 8 1 15-1 18-4z" fill="#d2c2de" />
        <path d="M18 10v1M24 10v1M20 14h3" stroke="#222" strokeWidth="1.500" />
      </g>
    </svg>
  );
}

function TaskViewIcon() {
  return (
    <svg viewBox="0 0 32 32" className="size-8">
      <rect x="1" y="10" width="23" height="20" rx="1.500" fill="#6a6a6a" />
      <rect x="9" y="2" width="22" height="20" rx="1.500" fill="#f3f3f3" />
      <path d="M9 10h15v12H9z" fill="#b4b4b4" />
    </svg>
  );
}

function CopilotIcon() {
  return (
    <svg viewBox="0 0 32 32" className="size-8">
      <defs>
        <linearGradient id="copA" x1="0.6" y1="0" x2="0.2" y2="1"><stop offset="0" stopColor="#1560d4" /><stop offset=".45" stopColor="#12a5c4" /><stop offset=".75" stopColor="#7fcb4a" /><stop offset="1" stopColor="#f5d317" /></linearGradient>
        <linearGradient id="copB" x1="0.8" y1="0" x2="0.2" y2="1"><stop offset="0" stopColor="#8f5bf0" /><stop offset=".5" stopColor="#ee5c9a" /><stop offset="1" stopColor="#ff8a3c" /></linearGradient>
      </defs>
      <path d="M9 4h10c2 0 3 1 3.500 3l.8 2.500h-5c-1.500 0-2.300 1-2.800 2.500l-2.500 8c-.6 2-1.500 3-3.500 3H4.500C2 23 1.500 20.500 2.200 18L5.500 7C6.200 5 7.200 4 9 4z" fill="url(#copA)" />
      <path d="M23 28H13c-2 0-3-1-3.500-3L9 22.500h4.500c1.500 0 2.300-1 2.800-2.500l2.500-8c.6-2 1.500-3 3.500-3h5c2.500 0 3.200 2.500 2.500 5l-3.300 11c-.7 2-1.700 3-3.500 3z" fill="url(#copB)" />
    </svg>
  );
}

function EdgeIcon() {
  return (
    <svg viewBox="0 0 32 32" className="size-8">
      <defs>
        <linearGradient id="edgeA" x1="0" y1="0.3" x2="1" y2="0.4"><stop offset="0" stopColor="#1f9de0" /><stop offset=".55" stopColor="#35c9c9" /><stop offset="1" stopColor="#6fe04c" /></linearGradient>
        <linearGradient id="edgeB" x1="0" y1="0" x2="0.6" y2="1"><stop offset="0" stopColor="#2aa3ea" /><stop offset="1" stopColor="#0c5fc0" /></linearGradient>
      </defs>
      <path d="M1 16C1 7.500 7.500 1 16 1s15 6 15 12.500c0 4.500-3.500 7.500-7.500 7.500-3.500 0-5.500-1.300-5.500-2.500 0-1 1.500-1.500 1.500-4S16.500 9 12 9C6 9 1 12 1 16z" fill="url(#edgeA)" />
      <path d="M1 16c0-4 4.500-7 10.500-7 4 0 7 2 7.800 4.500-4-1.500-8.300 1-8.300 5.500 0 6 4.500 11 10 11-1.500.7-3.500 1-5 1C7.500 31 1 24.500 1 16z" fill="url(#edgeB)" />
      <path d="M12 17c-1 7 5 10 10 9 3-.7 5-2 6.500-3.200.5-.3 1 .2.600.8C26.500 28 22 31 18.500 31 12 29.500 9 22 12 17z" fill="#114a9c" />
    </svg>
  );
}

function FolderIcon() {
  return (
    <svg viewBox="0 0 32 32" className="size-8">
      <path d="M1 5c0-1 .5-2 2-2h8l3 3v5H1z" fill="#e0a106" />
      <path d="M1 8h10l3-2.500h17V28.500c0 1-1 1.500-1.500 1.500h-27C1.500 30 1 29 1 28.500z" fill="#ffcd45" />
      <path d="M6 30v-5c0-1.500 1-2.500 2.500-2.500h15c1.500 0 2.500 1 2.500 2.500v5z" fill="#1277cf" />
      <path d="M9 26h14" stroke="#0a4f94" strokeWidth="1.500" />
    </svg>
  );
}

function StoreIcon() {
  return (
    <svg viewBox="0 0 32 32" className="size-8">
      <path d="M9.500 7V2.500h13V7" fill="none" stroke="#3cc0f5" strokeWidth="2" />
      <path d="M1.500 6.500h29V26c0 3-2 5-4.500 5H6c-2.500 0-4.500-2-4.500-5z" fill="#f1f1f1" />
      <path d="M10 13h5.500v5.500H10z" fill="#f25022" /><path d="M16.500 13H22v5.500h-5.500z" fill="#7fba00" />
      <path d="M10 19.500h5.500V25H10z" fill="#00a4ef" /><path d="M16.500 19.500H22V25h-5.500z" fill="#ffb900" />
    </svg>
  );
}

function HpIcon() {
  return (
    <span className="flex h-[30px] w-[30px] items-center justify-center rounded-[2px] bg-[#0096d6] text-xs leading-4 font-bold text-white italic">
      <span className="font-normal">my</span>hp
    </span>
  );
}

function HelpIcon() {
  return (
    <span className="relative flex size-[30px] items-center justify-center rounded-full border-2 border-white bg-[#0a93d3] text-[24px] leading-6 font-bold text-white">
      ?
      <span className="absolute -right-[8px] -top-[8px] size-5 rounded-full bg-[#ffbc0a]" />
    </span>
  );
}

function McafeeIcon() {
  return (
    <svg viewBox="0 0 32 32" className="size-8">
      <path d="M3 1l13 7 13-7v24L16 31 3 25zM9 10v12l7 3.500 7-3.500V10l-7 4z" fill="#c1272d" fillRule="evenodd" />
    </svg>
  );
}

function ChromeIcon() {
  return (
    <svg viewBox="0 0 32 32" className="size-8">
      <path d="M16 16 3 8.500A15 15 0 0 1 29 8.500z" fill="#ea4335" />
      <path d="M3 8.500 9.500 20 16 31A15 15 0 0 1 3 8.500z" fill="#34a853" />
      <path d="M29 8.500H16l6.500 11.200L16 31A15 15 0 0 0 29 8.500z" fill="#fbbc05" />
      <circle cx="16" cy="16" r="7.500" fill="#fff" />
      <circle cx="16" cy="16" r="6" fill="#2f7de9" />
    </svg>
  );
}

function CodeIcon() {
  return (
    <svg viewBox="0 0 32 32" className="size-8">
      <path d="M1.500 11.500 4 10.200l19 15V31L1.500 14z" fill="#1278c4" />
      <path d="M1.500 20.500 4 21.800l19-15V1L1.500 18z" fill="#1690df" />
      <path d="M23 1l7 3.500v23L23 31z" fill="#2aa8f5" />
    </svg>
  );
}

function NotepadIcon() {
  return (
    <svg viewBox="0 0 32 32" className="size-8">
      <rect x="5" y="3" width="22" height="28" rx="1" fill="#5cc4e0" />
      <path d="M5 27h22v3H5z" fill="#f2f2f2" /><path d="M5 29.500h22V31H5z" fill="#b3531b" />
      <path d="M8 1v4M12 1v4M16 1v4M20 1v4M24 1v4" stroke="#1a6f93" strokeWidth="2" />
      <path d="M9 11h14M9 16h14M9 21h14" stroke="#12678d" strokeWidth="2" />
    </svg>
  );
}

function MongoIcon() {
  return (
    <span className="flex size-[28px] items-center justify-center rounded-full bg-[#fafafa] text-[#0b6b4a]">
      <SiMongodb className="size-[18px]" />
    </span>
  );
}

const apps: { name: string; icon: React.ReactNode; state?: "active" | "open" }[] = [
  { name: "Task view", icon: <TaskViewIcon /> },
  { name: "Copilot", icon: <CopilotIcon /> },
  { name: "Edge", icon: <EdgeIcon /> },
  { name: "File Explorer", icon: <FolderIcon /> },
  { name: "Store", icon: <StoreIcon /> },
  { name: "HP", icon: <HpIcon /> },
  { name: "Help", icon: <HelpIcon /> },
  { name: "McAfee", icon: <McafeeIcon /> },
  { name: "Chrome", icon: <ChromeIcon />, state: "active" },
  { name: "Code", icon: <CodeIcon />, state: "open" },
  { name: "Notepad", icon: <NotepadIcon />, state: "open" },
  { name: "Compass", icon: <MongoIcon />, state: "open" },
];

function Weather() {
  return (
    <button className="flex items-center gap-2 pb-1 pl-[24px] text-left">
      <span className="relative block h-9 w-8">
        <svg viewBox="0 0 32 36" className="h-9 w-8">
          <defs><linearGradient id="sun" x1="0" y1="0" x2="0" y2="1"><stop offset="0" stopColor="#fbc02d" /><stop offset="1" stopColor="#f57c1f" /></linearGradient></defs>
          <path d="M2 21h28c0 8-6 13-14 13S3 29 2 21z" fill="url(#sun)" />
          <path d="M7 14h4M7 19h15M3 24h14M21 24h3M3 29h21" stroke="#8d8f90" strokeWidth="3" strokeLinecap="round" />
        </svg>
        <span className="absolute -top-[2px] left-[14px] flex size-5 items-center justify-center rounded-full bg-[#ff99a4] text-[13px] leading-4 text-black">9+</span>
      </span>
      <span className="text-sm leading-5 text-white">
        80°F<br /><span className="text-[#c9cfd1]">Haze</span>
      </span>
    </button>
  );
}

function Tray() {
  return (
    <div className="flex items-center justify-end pr-6 text-white">
      <button aria-label="Show hidden icons"><ChevronUp className="size-5" strokeWidth={2} /></button>
      <svg viewBox="0 0 22 18" className="ml-5 h-[18px] w-[22px]">
        <path d="M5 8a6 6 0 0 1 11-2c3 0 4 3 3 6H6z" fill="#a9adb0" />
        <path d="M5 8c2 0 3 .8 4 2 1-1 2-1.500 3-1.500L20 12c2 1 1 5-2 5H5C0 17-1 8 5 8z" fill="#fafafa" />
      </svg>
      <div className="ml-[20px] w-[34px] pb-[2px] text-center text-[15px] leading-5">ENG<br />IN</div>
      <svg viewBox="0 0 22 18" className="ml-5 h-[18px] w-[22px]" fill="none" stroke="#fff" strokeWidth="1.800" strokeLinecap="round">
        <path d="M1.500 7a13.500 13.500 0 0 1 19 0M4.500 10.300a9.200 9.200 0 0 1 13 0M7.500 13.300a5 5 0 0 1 7 0" /><circle cx="11" cy="16" r="1" fill="#fff" />
      </svg>
      <Volume2 className="ml-[9px] size-5" strokeWidth={1.800} />
      <svg viewBox="0 0 22 16" className="ml-[10px] h-4 w-[22px]" fill="none" stroke="#fff" strokeWidth="1.800">
        <rect x="1" y="2" width="17" height="12" rx="3" /><rect x="4" y="5" width="9" height="6" fill="#fff" stroke="none" /><path d="M20 6v4" strokeWidth="2.500" strokeLinecap="round" />
      </svg>
      <div className="ml-[18px] pb-1 text-right text-[15px] leading-5">20:53<br />27-02-2025</div>
      <svg viewBox="0 0 20 26" className="ml-[10px] h-[26px] w-5">
        <path d="M4 18V11a6 6 0 0 1 12 0v7l2 2.500H2zM7 22h6c0 3-6 3-6 0z" fill="#fff" stroke="#fff" />
        <path d="M7 11h4l-4 5h4" fill="none" stroke="#142a31" strokeWidth="1.500" />
        <path d="M14 3h5l-5 5h5" fill="none" stroke="#142a31" strokeWidth="4" /><path d="M14 3h5l-5 5h5" fill="none" stroke="#fff" strokeWidth="1.500" />
      </svg>
    </div>
  );
}

function Taskbar() {
  return (
    <div className="grid h-[60px] grid-cols-[1fr_auto_1fr] items-stretch border-t border-[#37494e] bg-[linear-gradient(to_right,#132a30,#142936_12%,#13292f_40%,#13292f_75%,#142733)]">
      <Weather />
      <div className="flex items-center pl-3">
        <button aria-label="Start" className="grid size-[30px] grid-cols-2 gap-px">
          <span className="bg-[#6fd8fb]" /><span className="bg-[#55d2fb]" /><span className="bg-[#35bdfb]" /><span className="bg-[#129cf5]" />
        </button>
        <label className="ml-[17px] flex h-10 w-[274px] items-center rounded-full border border-[#4d5f64] bg-[#34464b] pl-[14px] pr-[2px]">
          <Search className="size-5 text-[#dfe3e4]" strokeWidth={2.500} />
          <input aria-label="Search" placeholder="Search" className="ml-[11px] min-w-0 flex-1 bg-transparent text-base leading-6 outline-none placeholder:text-[#c6cdd0]" />
          <BearArt />
        </label>
        <div className="ml-[3px] flex items-center">
          {apps.map((a) => (
            <button
              key={a.name}
              aria-label={a.name}
              className={
                a.state === "active"
                  ? "relative mx-[2px] flex h-[50px] w-[51px] items-center justify-center rounded-md border border-[#2f4449] bg-[#22373e]"
                  : "relative mx-[2px] flex h-[50px] w-[51px] items-center justify-center"
              }
            >
              {a.icon}
              {a.state === "active" && <span className="absolute bottom-0 h-1 w-5 rounded bg-[#4cc2ff]" />}
              {a.state === "open" && <span className="absolute bottom-0 h-1 w-2 rounded bg-[#9aa0a3]" />}
            </button>
          ))}
        </div>
      </div>
      <Tray />
    </div>
  );
}

export default function App() {
  return (
    <div className="flex min-h-screen flex-col overflow-hidden font-['Open_Sans','Noto_Sans',sans-serif]">
      <TabStrip />
      <Toolbar />
      <Page />
      <Taskbar />
    </div>
  );
}
